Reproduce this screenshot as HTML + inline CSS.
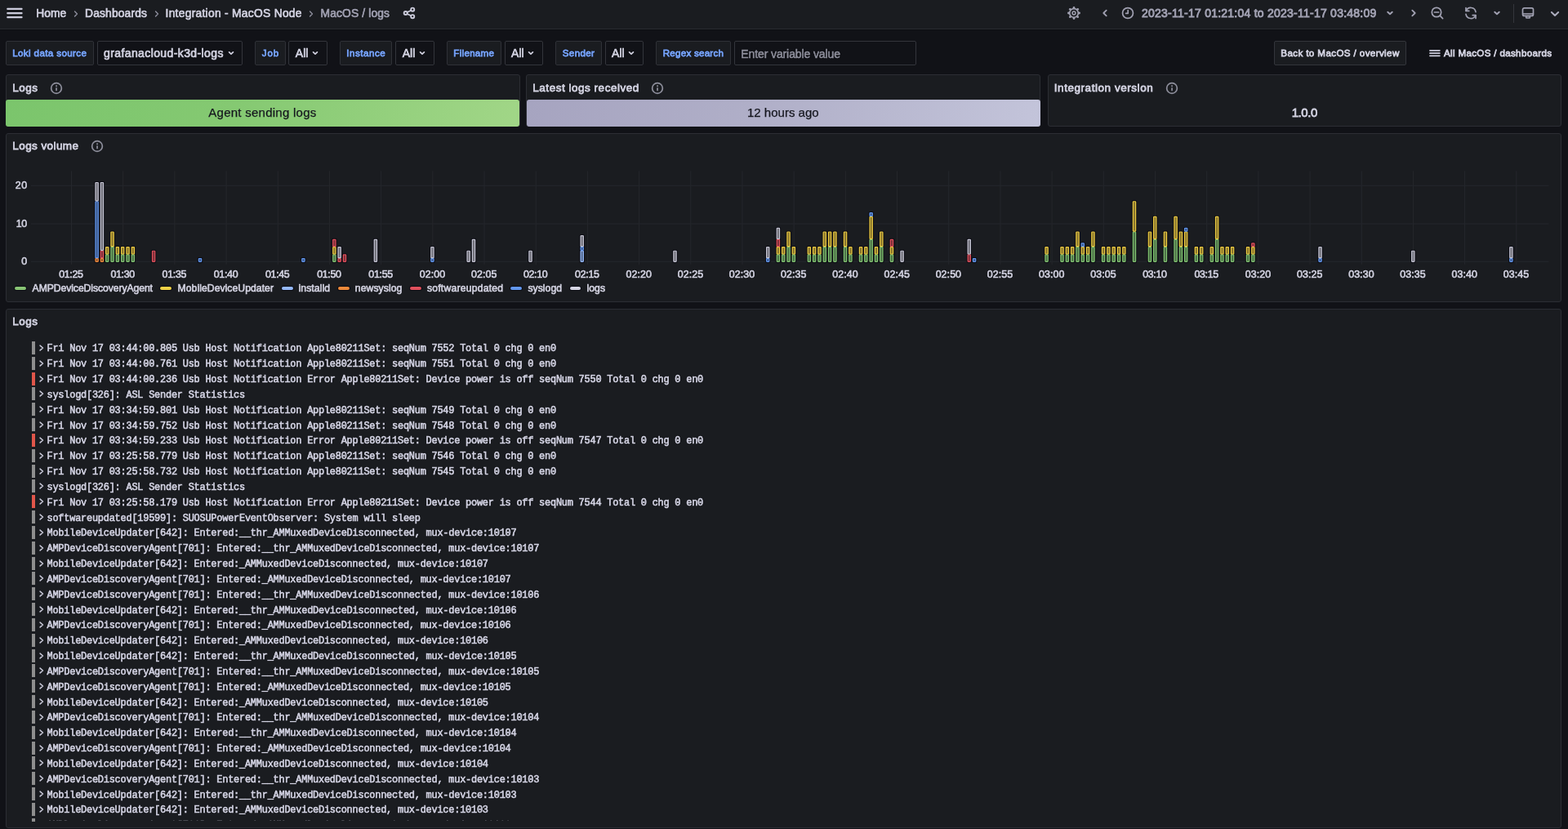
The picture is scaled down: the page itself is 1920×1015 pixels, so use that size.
<!DOCTYPE html>
<html lang="en"><head><meta charset="utf-8"><title>MacOS / logs - Dashboards - Grafana</title>
<style>
html,body{margin:0;padding:0;}
body{width:1920px;height:1015px;overflow:hidden;background:#111217;font-family:"Liberation Sans", Arial, sans-serif;font-size:14px;color:#d2d2e1;position:relative;}
#app{position:absolute;left:0;top:0;width:1920px;height:1015px;overflow:hidden;will-change:transform;}
.b{position:absolute;box-sizing:border-box;}
.t{position:absolute;white-space:pre;line-height:20px;text-shadow:0 0 1.2px rgba(0,0,5,0.9),0 0 1.2px rgba(0,0,5,0.9);}
svg{position:absolute;overflow:visible;}
.clip{position:absolute;overflow:hidden;}
</style></head>
<body>
<div id="app">
<header class="topnav" aria-label="Top navigation">
<div class="b" style="left:0px;top:0px;width:1920px;height:36px;background:#1a1c20;border-bottom:1px solid #292b30;"></div>
<div class="b" style="left:0px;top:36px;width:1920px;height:1px;background:#0d0e12;"></div>
<svg style="left:8px;top:8px" width="20" height="16" viewBox="0 0 20 16" ><g fill="#ccccdc"><rect x="0.2" y="1.7" width="19.4" height="2.3" rx="1"/><rect x="0.2" y="6.9" width="19.4" height="2.3" rx="1"/><rect x="0.2" y="12" width="19.4" height="2.3" rx="1"/></g></svg>
<span class="t" style="left:44.20px;top:6.82px;font-size:13.8px;color:#d2d2e1;letter-spacing:0.062px;-webkit-text-stroke:0.7px currentColor;">Home</span>
<svg style="left:87.3px;top:11px" width="12" height="12" viewBox="0 0 12 12" ><path d="M4.55 3.11 L7.45 6 L4.55 8.89" fill="none" stroke="#8e8f9e" stroke-width="1.4" stroke-linecap="round" stroke-linejoin="round"/></svg>
<span class="t" style="left:104.00px;top:6.82px;font-size:13.8px;color:#d2d2e1;letter-spacing:0.177px;-webkit-text-stroke:0.7px currentColor;">Dashboards</span>
<svg style="left:186px;top:11px" width="12" height="12" viewBox="0 0 12 12" ><path d="M4.55 3.11 L7.45 6 L4.55 8.89" fill="none" stroke="#8e8f9e" stroke-width="1.4" stroke-linecap="round" stroke-linejoin="round"/></svg>
<span class="t" style="left:202.50px;top:6.82px;font-size:13.8px;color:#d2d2e1;letter-spacing:0.292px;-webkit-text-stroke:0.7px currentColor;">Integration - MacOS Node</span>
<svg style="left:375.3px;top:11px" width="12" height="12" viewBox="0 0 12 12" ><path d="M4.55 3.11 L7.45 6 L4.55 8.89" fill="none" stroke="#8e8f9e" stroke-width="1.4" stroke-linecap="round" stroke-linejoin="round"/></svg>
<span class="t" style="left:392.50px;top:6.82px;font-size:13.8px;color:#a1a1b2;letter-spacing:0.153px;-webkit-text-stroke:0.7px currentColor;">MacOS / logs</span>
<svg style="left:493px;top:8px" width="18" height="18" viewBox="0 0 18 18" ><g fill="none" stroke="#ccccdc" stroke-width="1.9"><circle cx="12.2" cy="3.7" r="2.05"/><circle cx="3.7" cy="8" r="2.05"/><circle cx="12.2" cy="12.2" r="2.05"/><path d="M5.6 7 L10.3 4.7 M5.6 9 L10.3 11.3" stroke-width="1.7"/></g></svg>
<svg style="left:1306.5px;top:7.9px" width="16" height="16" viewBox="0 0 16 16" ><circle cx="8" cy="8" r="5.3" fill="none" stroke="#a1a1b2" stroke-width="1.7"/><circle cx="14.55" cy="8.00" r="1.4" fill="#a1a1b2"/><circle cx="12.63" cy="12.63" r="1.4" fill="#a1a1b2"/><circle cx="8.00" cy="14.55" r="1.4" fill="#a1a1b2"/><circle cx="3.37" cy="12.63" r="1.4" fill="#a1a1b2"/><circle cx="1.45" cy="8.00" r="1.4" fill="#a1a1b2"/><circle cx="3.37" cy="3.37" r="1.4" fill="#a1a1b2"/><circle cx="8.00" cy="1.45" r="1.4" fill="#a1a1b2"/><circle cx="12.63" cy="3.37" r="1.4" fill="#a1a1b2"/><circle cx="8" cy="8" r="1.9" fill="none" stroke="#a1a1b2" stroke-width="1.5"/></svg>
<svg style="left:1346.5px;top:10px" width="12" height="12" viewBox="0 0 12 12" ><path d="M7.70 2.60 L4.30 6 L7.70 9.40" fill="none" stroke="#a1a1b2" stroke-width="1.8" stroke-linecap="round" stroke-linejoin="round"/></svg>
<svg style="left:1373.25px;top:7.9px" width="16" height="16" viewBox="0 0 16 16" ><circle cx="8" cy="8" r="6.45" fill="none" stroke="#a1a1b2" stroke-width="1.7"/><path d="M8.2 4.6 V8.3 H5.6" fill="none" stroke="#a1a1b2" stroke-width="1.7" stroke-linecap="round" stroke-linejoin="round"/></svg>
<span class="t" style="left:1398.00px;top:6.05px;font-size:14px;color:#a1a1b2;letter-spacing:0.242px;-webkit-text-stroke:0.9px currentColor;">2023-11-17 01:21:04 to 2023-11-17 03:48:09</span>
<svg style="left:1696.4px;top:9.7px" width="12" height="12" viewBox="0 0 12 12" ><path d="M3.25 4.70 L6 7.30 L8.75 4.70" fill="none" stroke="#a1a1b2" stroke-width="1.9" stroke-linecap="round" stroke-linejoin="round"/></svg>
<svg style="left:1724.6px;top:10px" width="12" height="12" viewBox="0 0 12 12" ><path d="M4.30 2.60 L7.70 6 L4.30 9.40" fill="none" stroke="#a1a1b2" stroke-width="1.8" stroke-linecap="round" stroke-linejoin="round"/></svg>
<svg style="left:1750px;top:6.4px" width="20" height="20" viewBox="0 0 20 20" ><g fill="none" stroke="#a1a1b2" stroke-width="1.7" stroke-linecap="round"><circle cx="9" cy="9" r="5.7"/><path d="M13.4 13.4 L16.6 16.6"/><path d="M6.4 9 H11.6"/></g></svg>
<svg style="left:1792.4px;top:6.6px" width="18" height="18" viewBox="0 0 18 18" ><g fill="none" stroke="#a1a1b2" stroke-width="1.7" stroke-linecap="round" stroke-linejoin="round"><path d="M3.3 6.3 A6.1 6.1 0 0 1 15 7.6"/><path d="M14.7 11.7 A6.1 6.1 0 0 1 3 10.4"/><path d="M3 2.6 V6.4 H6.8"/><path d="M15 15.4 V11.6 H11.2"/></g></svg>
<svg style="left:1827.2px;top:9.7px" width="12" height="12" viewBox="0 0 12 12" ><path d="M3.25 4.70 L6 7.30 L8.75 4.70" fill="none" stroke="#a1a1b2" stroke-width="1.9" stroke-linecap="round" stroke-linejoin="round"/></svg>
<div class="b" style="left:1853px;top:4.5px;width:1.2px;height:23px;background:#34363c;"></div>
<svg style="left:1861.9px;top:7px" width="18" height="18" viewBox="0 0 18 18" ><g fill="none" stroke="#a1a1b2" stroke-width="1.7" stroke-linejoin="round"><rect x="2.5" y="2.8" width="13" height="9.6" rx="2"/><path d="M3 9.9 H15" stroke-width="1.5"/><rect x="6.6" y="12.8" width="4.8" height="2.3" rx="0.8" stroke-width="1.5"/></g></svg>
<svg style="left:1898px;top:11px" width="12" height="12" viewBox="0 0 12 12" ><path d="M1.88 4.05 L6 7.95 L10.12 4.05" fill="none" stroke="#adadbe" stroke-width="2.0" stroke-linecap="round" stroke-linejoin="round"/></svg>
</header>
<nav class="submenu" aria-label="Dashboard variables and links">
<div class="b" style="left:7px;top:50px;width:107.7px;height:30px;background:#1a1c20;border:1px solid #2f3137;border-radius:2px;"></div>
<span class="t" style="left:15.20px;top:55.08px;font-size:11.6px;color:#76a3fc;letter-spacing:0.381px;-webkit-text-stroke:0.8px currentColor;">Loki data source</span>
<div class="b" style="left:119px;top:50px;width:178px;height:30px;background:#111217;border:1px solid #33353b;border-radius:2px;"></div>
<span class="t" style="left:127.00px;top:54.95px;font-size:14px;color:#d2d2e1;letter-spacing:0.398px;-webkit-text-stroke:0.7px currentColor;">grafanacloud-k3d-logs</span>
<svg style="left:277px;top:58.8px" width="12" height="12" viewBox="0 0 12 12" ><path d="M3.58 4.86 L6 7.14 L8.42 4.86" fill="none" stroke="#d2d2e1" stroke-width="1.7" stroke-linecap="round" stroke-linejoin="round"/></svg>
<div class="b" style="left:312.2px;top:50px;width:37.5px;height:30px;background:#1a1c20;border:1px solid #2f3137;border-radius:2px;"></div>
<span class="t" style="left:320.80px;top:55.08px;font-size:11.6px;color:#76a3fc;letter-spacing:0.898px;-webkit-text-stroke:0.8px currentColor;">Job</span>
<div class="b" style="left:353.3px;top:50px;width:47.69999999999999px;height:30px;background:#111217;border:1px solid #33353b;border-radius:2px;"></div>
<span class="t" style="left:361.70px;top:54.95px;font-size:14px;color:#d2d2e1;letter-spacing:0.119px;-webkit-text-stroke:0.7px currentColor;">All</span>
<svg style="left:380px;top:58.8px" width="12" height="12" viewBox="0 0 12 12" ><path d="M3.58 4.86 L6 7.14 L8.42 4.86" fill="none" stroke="#d2d2e1" stroke-width="1.7" stroke-linecap="round" stroke-linejoin="round"/></svg>
<div class="b" style="left:416.2px;top:50px;width:64.30000000000001px;height:30px;background:#1a1c20;border:1px solid #2f3137;border-radius:2px;"></div>
<span class="t" style="left:424.30px;top:55.08px;font-size:11.6px;color:#76a3fc;letter-spacing:0.510px;-webkit-text-stroke:0.8px currentColor;">Instance</span>
<div class="b" style="left:484.2px;top:50px;width:47.50000000000006px;height:30px;background:#111217;border:1px solid #33353b;border-radius:2px;"></div>
<span class="t" style="left:492.70px;top:54.95px;font-size:14px;color:#d2d2e1;letter-spacing:0.019px;-webkit-text-stroke:0.7px currentColor;">All</span>
<svg style="left:511px;top:58.8px" width="12" height="12" viewBox="0 0 12 12" ><path d="M3.58 4.86 L6 7.14 L8.42 4.86" fill="none" stroke="#d2d2e1" stroke-width="1.7" stroke-linecap="round" stroke-linejoin="round"/></svg>
<div class="b" style="left:547px;top:50px;width:66.70000000000005px;height:30px;background:#1a1c20;border:1px solid #2f3137;border-radius:2px;"></div>
<span class="t" style="left:555.30px;top:55.08px;font-size:11.6px;color:#76a3fc;letter-spacing:0.288px;-webkit-text-stroke:0.8px currentColor;">Filename</span>
<div class="b" style="left:617.7px;top:50px;width:47.299999999999955px;height:30px;background:#111217;border:1px solid #33353b;border-radius:2px;"></div>
<span class="t" style="left:626.00px;top:54.95px;font-size:14px;color:#d2d2e1;letter-spacing:0.069px;-webkit-text-stroke:0.7px currentColor;">All</span>
<svg style="left:644.3px;top:58.8px" width="12" height="12" viewBox="0 0 12 12" ><path d="M3.58 4.86 L6 7.14 L8.42 4.86" fill="none" stroke="#d2d2e1" stroke-width="1.7" stroke-linecap="round" stroke-linejoin="round"/></svg>
<div class="b" style="left:680px;top:50px;width:56.700000000000045px;height:30px;background:#1a1c20;border:1px solid #2f3137;border-radius:2px;"></div>
<span class="t" style="left:688.70px;top:55.08px;font-size:11.6px;color:#76a3fc;letter-spacing:0.382px;-webkit-text-stroke:0.8px currentColor;">Sender</span>
<div class="b" style="left:740.7px;top:50px;width:47.299999999999955px;height:30px;background:#111217;border:1px solid #33353b;border-radius:2px;"></div>
<span class="t" style="left:749.00px;top:54.95px;font-size:14px;color:#d2d2e1;letter-spacing:0.069px;-webkit-text-stroke:0.7px currentColor;">All</span>
<svg style="left:767.3px;top:58.8px" width="12" height="12" viewBox="0 0 12 12" ><path d="M3.58 4.86 L6 7.14 L8.42 4.86" fill="none" stroke="#d2d2e1" stroke-width="1.7" stroke-linecap="round" stroke-linejoin="round"/></svg>
<div class="b" style="left:803.3px;top:50px;width:91.70000000000005px;height:30px;background:#1a1c20;border:1px solid #2f3137;border-radius:2px;"></div>
<span class="t" style="left:811.70px;top:55.08px;font-size:11.6px;color:#76a3fc;letter-spacing:0.250px;-webkit-text-stroke:0.8px currentColor;">Regex search</span>
<div class="b" style="left:899px;top:50px;width:223px;height:30px;background:#111217;border:1px solid #33353b;border-radius:2px;"></div>
<span class="t" style="left:907.30px;top:55.65px;font-size:14px;color:#8f909d;letter-spacing:-0.108px;-webkit-text-stroke:0.5px currentColor;">Enter variable value</span>
<div class="b" style="left:1560px;top:50px;width:162px;height:30px;background:#1a1c20;border:1px solid #33353b;border-radius:2px;"></div>
<span class="t" style="left:1568.30px;top:55.08px;font-size:11.6px;color:#d2d2e1;letter-spacing:0.393px;-webkit-text-stroke:0.8px currentColor;">Back to MacOS / overview</span>
<svg style="left:1750px;top:58px" width="14" height="14" viewBox="0 0 14 14" ><g fill="#ccccdc"><rect x="0.1" y="3" width="13.6" height="1.7" rx="0.8"/><rect x="0.1" y="6.3" width="13.6" height="1.7" rx="0.8"/><rect x="0.1" y="9.6" width="13.6" height="1.7" rx="0.8"/></g></svg>
<span class="t" style="left:1768.00px;top:55.08px;font-size:11.6px;color:#d2d2e1;letter-spacing:0.333px;-webkit-text-stroke:0.8px currentColor;">All MacOS / dashboards</span>
</nav>
<section class="stats" aria-label="Stat panels">
<div class="b" style="left:7px;top:91px;width:630px;height:64px;background:#1a1c20;border:1px solid #2c2e34;border-radius:3px;"></div>
<span class="t" style="left:15.30px;top:97.62px;font-size:13.5px;color:#d2d2e1;letter-spacing:0.473px;-webkit-text-stroke:0.8px currentColor;">Logs</span>
<svg style="left:60.599999999999994px;top:99.5px" width="16" height="16" viewBox="0 0 16 16" ><circle cx="8" cy="8" r="6.35" fill="none" stroke="#8e8f9c" stroke-width="1.7"/><rect x="7.2" y="7.3" width="1.7" height="4" rx="0.5" fill="#8e8f9c"/><circle cx="8.05" cy="5.2" r="1" fill="#8e8f9c"/></svg>
<div class="b" style="left:7.3px;top:122.3px;width:629.2px;height:32.5px;background:linear-gradient(100deg,#7bc56c 0%,#85c972 45%,#a1d687 100%);border-radius:3px;"></div>
<span class="t" style="left:255.30px;top:128.30px;font-size:15px;color:#15161e;letter-spacing:0.258px;-webkit-text-stroke:0.25px currentColor;text-shadow:none;">Agent sending logs</span>
<div class="b" style="left:644px;top:91px;width:630px;height:64px;background:#1a1c20;border:1px solid #2c2e34;border-radius:3px;"></div>
<span class="t" style="left:652.30px;top:97.62px;font-size:13.5px;color:#d2d2e1;letter-spacing:0.522px;-webkit-text-stroke:0.8px currentColor;">Latest logs received</span>
<svg style="left:797px;top:99.5px" width="16" height="16" viewBox="0 0 16 16" ><circle cx="8" cy="8" r="6.35" fill="none" stroke="#8e8f9c" stroke-width="1.7"/><rect x="7.2" y="7.3" width="1.7" height="4" rx="0.5" fill="#8e8f9c"/><circle cx="8.05" cy="5.2" r="1" fill="#8e8f9c"/></svg>
<div class="b" style="left:644.7px;top:122.3px;width:629px;height:32.5px;background:linear-gradient(100deg,#a6a4c0 0%,#b0afc8 45%,#c3c4da 100%);border-radius:3px;"></div>
<span class="t" style="left:914.95px;top:128.30px;font-size:15px;color:#15161e;letter-spacing:0.011px;-webkit-text-stroke:0.25px currentColor;text-shadow:none;">12 hours ago</span>
<div class="b" style="left:1282.5px;top:91px;width:629.5px;height:64px;background:#1a1c20;border:1px solid #2c2e34;border-radius:3px;"></div>
<span class="t" style="left:1290.80px;top:97.62px;font-size:13.5px;color:#d2d2e1;letter-spacing:0.546px;-webkit-text-stroke:0.8px currentColor;">Integration version</span>
<svg style="left:1427px;top:99.5px" width="16" height="16" viewBox="0 0 16 16" ><circle cx="8" cy="8" r="6.35" fill="none" stroke="#8e8f9c" stroke-width="1.7"/><rect x="7.2" y="7.3" width="1.7" height="4" rx="0.5" fill="#8e8f9c"/><circle cx="8.05" cy="5.2" r="1" fill="#8e8f9c"/></svg>
<span class="t" style="left:1581.70px;top:128.30px;font-size:15px;color:#d2d2e1;letter-spacing:-0.444px;-webkit-text-stroke:0.8px currentColor;">1.0.0</span>
</section>
<section class="panel-chart" aria-label="Logs volume">
<div class="b" style="left:7px;top:163px;width:1905px;height:207px;background:#1a1c20;border:1px solid #2c2e34;border-radius:3px;"></div>
<span class="t" style="left:15.30px;top:168.62px;font-size:13.5px;color:#d2d2e1;letter-spacing:0.415px;-webkit-text-stroke:0.8px currentColor;">Logs volume</span>
<svg style="left:110.7px;top:170.5px" width="16" height="16" viewBox="0 0 16 16" ><circle cx="8" cy="8" r="6.35" fill="none" stroke="#8e8f9c" stroke-width="1.7"/><rect x="7.2" y="7.3" width="1.7" height="4" rx="0.5" fill="#8e8f9c"/><circle cx="8.05" cy="5.2" r="1" fill="#8e8f9c"/></svg>
<svg style="left:0;top:0" width="1920" height="380" viewBox="0 0 1920 380"><rect x="38" y="319.75" width="1858.5" height="1" fill="#25272c"/><rect x="38" y="273.50" width="1858.5" height="1" fill="#25272c"/><rect x="38" y="226.75" width="1858.5" height="1" fill="#25272c"/><rect x="87.00" y="209.4" width="1" height="114.4" fill="#25272c"/><rect x="150.19" y="209.4" width="1" height="114.4" fill="#25272c"/><rect x="213.38" y="209.4" width="1" height="114.4" fill="#25272c"/><rect x="276.57" y="209.4" width="1" height="114.4" fill="#25272c"/><rect x="339.76" y="209.4" width="1" height="114.4" fill="#25272c"/><rect x="402.95" y="209.4" width="1" height="114.4" fill="#25272c"/><rect x="466.14" y="209.4" width="1" height="114.4" fill="#25272c"/><rect x="529.33" y="209.4" width="1" height="114.4" fill="#25272c"/><rect x="592.52" y="209.4" width="1" height="114.4" fill="#25272c"/><rect x="655.71" y="209.4" width="1" height="114.4" fill="#25272c"/><rect x="718.90" y="209.4" width="1" height="114.4" fill="#25272c"/><rect x="782.09" y="209.4" width="1" height="114.4" fill="#25272c"/><rect x="845.28" y="209.4" width="1" height="114.4" fill="#25272c"/><rect x="908.47" y="209.4" width="1" height="114.4" fill="#25272c"/><rect x="971.66" y="209.4" width="1" height="114.4" fill="#25272c"/><rect x="1034.85" y="209.4" width="1" height="114.4" fill="#25272c"/><rect x="1098.04" y="209.4" width="1" height="114.4" fill="#25272c"/><rect x="1161.23" y="209.4" width="1" height="114.4" fill="#25272c"/><rect x="1224.42" y="209.4" width="1" height="114.4" fill="#25272c"/><rect x="1287.61" y="209.4" width="1" height="114.4" fill="#25272c"/><rect x="1350.80" y="209.4" width="1" height="114.4" fill="#25272c"/><rect x="1413.99" y="209.4" width="1" height="114.4" fill="#25272c"/><rect x="1477.18" y="209.4" width="1" height="114.4" fill="#25272c"/><rect x="1540.37" y="209.4" width="1" height="114.4" fill="#25272c"/><rect x="1603.56" y="209.4" width="1" height="114.4" fill="#25272c"/><rect x="1666.75" y="209.4" width="1" height="114.4" fill="#25272c"/><rect x="1729.94" y="209.4" width="1" height="114.4" fill="#25272c"/><rect x="1793.13" y="209.4" width="1" height="114.4" fill="#25272c"/><rect x="1856.32" y="209.4" width="1" height="114.4" fill="#25272c"/><g fill="#07070f" fill-opacity="0.75"><rect x="115.35" y="222.06" width="6.5" height="99.59" rx="1.5"/><rect x="121.67" y="222.06" width="6.5" height="99.59" rx="1.5"/><rect x="127.99" y="301.14" width="6.5" height="20.51" rx="1.5"/><rect x="134.31" y="282.53" width="6.5" height="39.12" rx="1.5"/><rect x="140.63" y="301.14" width="6.5" height="20.51" rx="1.5"/><rect x="146.95" y="301.14" width="6.5" height="20.51" rx="1.5"/><rect x="153.27" y="301.14" width="6.5" height="20.51" rx="1.5"/><rect x="159.59" y="301.14" width="6.5" height="20.51" rx="1.5"/><rect x="184.88" y="305.79" width="6.5" height="15.86" rx="1.5"/><rect x="241.76" y="315.10" width="6.5" height="6.55" rx="1.5"/><rect x="368.17" y="315.10" width="6.5" height="6.55" rx="1.5"/><rect x="406.09" y="291.84" width="6.5" height="29.81" rx="1.5"/><rect x="412.41" y="301.14" width="6.5" height="20.51" rx="1.5"/><rect x="418.73" y="310.45" width="6.5" height="11.20" rx="1.5"/><rect x="456.65" y="291.84" width="6.5" height="29.81" rx="1.5"/><rect x="526.18" y="301.14" width="6.5" height="20.51" rx="1.5"/><rect x="570.42" y="305.79" width="6.5" height="15.86" rx="1.5"/><rect x="576.74" y="291.84" width="6.5" height="29.81" rx="1.5"/><rect x="646.27" y="305.79" width="6.5" height="15.86" rx="1.5"/><rect x="709.47" y="287.19" width="6.5" height="34.46" rx="1.5"/><rect x="823.24" y="305.79" width="6.5" height="15.86" rx="1.5"/><rect x="937.00" y="301.14" width="6.5" height="20.51" rx="1.5"/><rect x="949.64" y="277.88" width="6.5" height="43.77" rx="1.5"/><rect x="955.97" y="301.14" width="6.5" height="20.51" rx="1.5"/><rect x="962.29" y="282.53" width="6.5" height="39.12" rx="1.5"/><rect x="968.61" y="301.14" width="6.5" height="20.51" rx="1.5"/><rect x="987.57" y="301.14" width="6.5" height="20.51" rx="1.5"/><rect x="993.89" y="301.14" width="6.5" height="20.51" rx="1.5"/><rect x="1000.21" y="301.14" width="6.5" height="20.51" rx="1.5"/><rect x="1006.53" y="282.53" width="6.5" height="39.12" rx="1.5"/><rect x="1012.85" y="282.53" width="6.5" height="39.12" rx="1.5"/><rect x="1019.17" y="282.53" width="6.5" height="39.12" rx="1.5"/><rect x="1031.81" y="282.53" width="6.5" height="39.12" rx="1.5"/><rect x="1038.13" y="301.14" width="6.5" height="20.51" rx="1.5"/><rect x="1050.77" y="301.14" width="6.5" height="20.51" rx="1.5"/><rect x="1057.09" y="301.14" width="6.5" height="20.51" rx="1.5"/><rect x="1063.41" y="259.27" width="6.5" height="62.38" rx="1.5"/><rect x="1069.73" y="301.14" width="6.5" height="20.51" rx="1.5"/><rect x="1076.05" y="282.53" width="6.5" height="39.12" rx="1.5"/><rect x="1088.69" y="291.84" width="6.5" height="29.81" rx="1.5"/><rect x="1101.33" y="305.79" width="6.5" height="15.86" rx="1.5"/><rect x="1183.50" y="291.84" width="6.5" height="29.81" rx="1.5"/><rect x="1189.82" y="315.10" width="6.5" height="6.55" rx="1.5"/><rect x="1278.31" y="301.14" width="6.5" height="20.51" rx="1.5"/><rect x="1297.27" y="301.14" width="6.5" height="20.51" rx="1.5"/><rect x="1303.59" y="301.14" width="6.5" height="20.51" rx="1.5"/><rect x="1309.91" y="301.14" width="6.5" height="20.51" rx="1.5"/><rect x="1316.23" y="282.53" width="6.5" height="39.12" rx="1.5"/><rect x="1322.55" y="296.49" width="6.5" height="25.16" rx="1.5"/><rect x="1328.87" y="301.14" width="6.5" height="20.51" rx="1.5"/><rect x="1335.19" y="282.53" width="6.5" height="39.12" rx="1.5"/><rect x="1347.83" y="301.14" width="6.5" height="20.51" rx="1.5"/><rect x="1354.15" y="301.14" width="6.5" height="20.51" rx="1.5"/><rect x="1360.47" y="301.14" width="6.5" height="20.51" rx="1.5"/><rect x="1366.79" y="301.14" width="6.5" height="20.51" rx="1.5"/><rect x="1373.11" y="301.14" width="6.5" height="20.51" rx="1.5"/><rect x="1385.75" y="245.32" width="6.5" height="76.33" rx="1.5"/><rect x="1404.71" y="282.53" width="6.5" height="39.12" rx="1.5"/><rect x="1411.03" y="263.93" width="6.5" height="57.72" rx="1.5"/><rect x="1423.67" y="282.53" width="6.5" height="39.12" rx="1.5"/><rect x="1436.32" y="263.93" width="6.5" height="57.72" rx="1.5"/><rect x="1442.64" y="282.53" width="6.5" height="39.12" rx="1.5"/><rect x="1448.96" y="277.88" width="6.5" height="43.77" rx="1.5"/><rect x="1461.60" y="301.14" width="6.5" height="20.51" rx="1.5"/><rect x="1467.92" y="301.14" width="6.5" height="20.51" rx="1.5"/><rect x="1480.56" y="301.14" width="6.5" height="20.51" rx="1.5"/><rect x="1486.88" y="263.93" width="6.5" height="57.72" rx="1.5"/><rect x="1493.20" y="301.14" width="6.5" height="20.51" rx="1.5"/><rect x="1499.52" y="301.14" width="6.5" height="20.51" rx="1.5"/><rect x="1505.84" y="301.14" width="6.5" height="20.51" rx="1.5"/><rect x="1524.80" y="301.14" width="6.5" height="20.51" rx="1.5"/><rect x="1531.12" y="296.49" width="6.5" height="25.16" rx="1.5"/><rect x="1613.29" y="301.14" width="6.5" height="20.51" rx="1.5"/><rect x="1727.05" y="305.79" width="6.5" height="15.86" rx="1.5"/><rect x="1847.14" y="301.14" width="6.5" height="20.51" rx="1.5"/></g><rect x="116.95" y="316.55" width="3.3" height="3.75" rx="0.5" fill="#f08a3c" fill-opacity="0.55" stroke="#f08a3c" stroke-width="1.2"/><rect x="116.95" y="246.77" width="3.3" height="68.88" rx="0.5" fill="#6297ee" fill-opacity="0.55" stroke="#6297ee" stroke-width="1.2"/><rect x="116.95" y="223.51" width="3.3" height="22.36" rx="0.5" fill="#c4c4d2" fill-opacity="0.55" stroke="#c4c4d2" stroke-width="1.2"/><rect x="123.27" y="316.55" width="3.3" height="3.75" rx="0.5" fill="#f08a3c" fill-opacity="0.55" stroke="#f08a3c" stroke-width="1.2"/><rect x="123.27" y="307.24" width="3.3" height="8.40" rx="0.5" fill="#e0505c" fill-opacity="0.55" stroke="#e0505c" stroke-width="1.2"/><rect x="123.27" y="223.51" width="3.3" height="82.84" rx="0.5" fill="#c4c4d2" fill-opacity="0.55" stroke="#c4c4d2" stroke-width="1.2"/><rect x="129.59" y="311.90" width="3.3" height="8.40" rx="0.5" fill="#82c472" fill-opacity="0.55" stroke="#82c472" stroke-width="1.2"/><rect x="129.59" y="302.59" width="3.3" height="8.40" rx="0.5" fill="#eccb42" fill-opacity="0.55" stroke="#eccb42" stroke-width="1.2"/><rect x="135.91" y="302.59" width="3.3" height="17.71" rx="0.5" fill="#82c472" fill-opacity="0.55" stroke="#82c472" stroke-width="1.2"/><rect x="135.91" y="283.98" width="3.3" height="17.71" rx="0.5" fill="#eccb42" fill-opacity="0.55" stroke="#eccb42" stroke-width="1.2"/><rect x="142.23" y="311.90" width="3.3" height="8.40" rx="0.5" fill="#82c472" fill-opacity="0.55" stroke="#82c472" stroke-width="1.2"/><rect x="142.23" y="302.59" width="3.3" height="8.40" rx="0.5" fill="#eccb42" fill-opacity="0.55" stroke="#eccb42" stroke-width="1.2"/><rect x="148.55" y="311.90" width="3.3" height="8.40" rx="0.5" fill="#82c472" fill-opacity="0.55" stroke="#82c472" stroke-width="1.2"/><rect x="148.55" y="302.59" width="3.3" height="8.40" rx="0.5" fill="#eccb42" fill-opacity="0.55" stroke="#eccb42" stroke-width="1.2"/><rect x="154.87" y="311.90" width="3.3" height="8.40" rx="0.5" fill="#82c472" fill-opacity="0.55" stroke="#82c472" stroke-width="1.2"/><rect x="154.87" y="302.59" width="3.3" height="8.40" rx="0.5" fill="#eccb42" fill-opacity="0.55" stroke="#eccb42" stroke-width="1.2"/><rect x="161.19" y="311.90" width="3.3" height="8.40" rx="0.5" fill="#82c472" fill-opacity="0.55" stroke="#82c472" stroke-width="1.2"/><rect x="161.19" y="302.59" width="3.3" height="8.40" rx="0.5" fill="#eccb42" fill-opacity="0.55" stroke="#eccb42" stroke-width="1.2"/><rect x="186.48" y="307.24" width="3.3" height="13.06" rx="0.5" fill="#e0505c" fill-opacity="0.55" stroke="#e0505c" stroke-width="1.2"/><rect x="243.36" y="316.55" width="3.3" height="3.75" rx="0.5" fill="#6297ee" fill-opacity="0.55" stroke="#6297ee" stroke-width="1.2"/><rect x="369.77" y="316.55" width="3.3" height="3.75" rx="0.5" fill="#6297ee" fill-opacity="0.55" stroke="#6297ee" stroke-width="1.2"/><rect x="407.69" y="311.90" width="3.3" height="8.40" rx="0.5" fill="#82c472" fill-opacity="0.55" stroke="#82c472" stroke-width="1.2"/><rect x="407.69" y="302.59" width="3.3" height="8.40" rx="0.5" fill="#eccb42" fill-opacity="0.55" stroke="#eccb42" stroke-width="1.2"/><rect x="407.69" y="293.29" width="3.3" height="8.40" rx="0.5" fill="#e0505c" fill-opacity="0.55" stroke="#e0505c" stroke-width="1.2"/><rect x="414.01" y="316.55" width="3.3" height="3.75" rx="0.5" fill="#e0505c" fill-opacity="0.55" stroke="#e0505c" stroke-width="1.2"/><rect x="414.01" y="302.59" width="3.3" height="13.06" rx="0.5" fill="#c4c4d2" fill-opacity="0.55" stroke="#c4c4d2" stroke-width="1.2"/><rect x="420.33" y="311.90" width="3.3" height="8.40" rx="0.5" fill="#e0505c" fill-opacity="0.55" stroke="#e0505c" stroke-width="1.2"/><rect x="458.25" y="293.29" width="3.3" height="27.01" rx="0.5" fill="#c4c4d2" fill-opacity="0.55" stroke="#c4c4d2" stroke-width="1.2"/><rect x="527.78" y="316.55" width="3.3" height="3.75" rx="0.5" fill="#6297ee" fill-opacity="0.55" stroke="#6297ee" stroke-width="1.2"/><rect x="527.78" y="302.59" width="3.3" height="13.06" rx="0.5" fill="#c4c4d2" fill-opacity="0.55" stroke="#c4c4d2" stroke-width="1.2"/><rect x="572.02" y="307.24" width="3.3" height="13.06" rx="0.5" fill="#c4c4d2" fill-opacity="0.55" stroke="#c4c4d2" stroke-width="1.2"/><rect x="578.34" y="293.29" width="3.3" height="27.01" rx="0.5" fill="#c4c4d2" fill-opacity="0.55" stroke="#c4c4d2" stroke-width="1.2"/><rect x="647.87" y="307.24" width="3.3" height="13.06" rx="0.5" fill="#c4c4d2" fill-opacity="0.55" stroke="#c4c4d2" stroke-width="1.2"/><rect x="711.07" y="307.24" width="3.3" height="13.06" rx="0.5" fill="#94b8f8" fill-opacity="0.55" stroke="#94b8f8" stroke-width="1.2"/><rect x="711.07" y="302.59" width="3.3" height="3.75" rx="0.5" fill="#6297ee" fill-opacity="0.55" stroke="#6297ee" stroke-width="1.2"/><rect x="711.07" y="288.64" width="3.3" height="13.06" rx="0.5" fill="#c4c4d2" fill-opacity="0.55" stroke="#c4c4d2" stroke-width="1.2"/><rect x="824.84" y="307.24" width="3.3" height="13.06" rx="0.5" fill="#c4c4d2" fill-opacity="0.55" stroke="#c4c4d2" stroke-width="1.2"/><rect x="938.60" y="316.55" width="3.3" height="3.75" rx="0.5" fill="#6297ee" fill-opacity="0.55" stroke="#6297ee" stroke-width="1.2"/><rect x="938.60" y="302.59" width="3.3" height="13.06" rx="0.5" fill="#c4c4d2" fill-opacity="0.55" stroke="#c4c4d2" stroke-width="1.2"/><rect x="951.24" y="311.90" width="3.3" height="8.40" rx="0.5" fill="#82c472" fill-opacity="0.55" stroke="#82c472" stroke-width="1.2"/><rect x="951.24" y="302.59" width="3.3" height="8.40" rx="0.5" fill="#eccb42" fill-opacity="0.55" stroke="#eccb42" stroke-width="1.2"/><rect x="951.24" y="293.29" width="3.3" height="8.40" rx="0.5" fill="#e0505c" fill-opacity="0.55" stroke="#e0505c" stroke-width="1.2"/><rect x="951.24" y="279.33" width="3.3" height="13.06" rx="0.5" fill="#c4c4d2" fill-opacity="0.55" stroke="#c4c4d2" stroke-width="1.2"/><rect x="957.57" y="311.90" width="3.3" height="8.40" rx="0.5" fill="#82c472" fill-opacity="0.55" stroke="#82c472" stroke-width="1.2"/><rect x="957.57" y="302.59" width="3.3" height="8.40" rx="0.5" fill="#eccb42" fill-opacity="0.55" stroke="#eccb42" stroke-width="1.2"/><rect x="963.89" y="302.59" width="3.3" height="17.71" rx="0.5" fill="#82c472" fill-opacity="0.55" stroke="#82c472" stroke-width="1.2"/><rect x="963.89" y="283.98" width="3.3" height="17.71" rx="0.5" fill="#eccb42" fill-opacity="0.55" stroke="#eccb42" stroke-width="1.2"/><rect x="970.21" y="311.90" width="3.3" height="8.40" rx="0.5" fill="#82c472" fill-opacity="0.55" stroke="#82c472" stroke-width="1.2"/><rect x="970.21" y="302.59" width="3.3" height="8.40" rx="0.5" fill="#eccb42" fill-opacity="0.55" stroke="#eccb42" stroke-width="1.2"/><rect x="989.17" y="311.90" width="3.3" height="8.40" rx="0.5" fill="#82c472" fill-opacity="0.55" stroke="#82c472" stroke-width="1.2"/><rect x="989.17" y="302.59" width="3.3" height="8.40" rx="0.5" fill="#eccb42" fill-opacity="0.55" stroke="#eccb42" stroke-width="1.2"/><rect x="995.49" y="311.90" width="3.3" height="8.40" rx="0.5" fill="#82c472" fill-opacity="0.55" stroke="#82c472" stroke-width="1.2"/><rect x="995.49" y="302.59" width="3.3" height="8.40" rx="0.5" fill="#eccb42" fill-opacity="0.55" stroke="#eccb42" stroke-width="1.2"/><rect x="1001.81" y="311.90" width="3.3" height="8.40" rx="0.5" fill="#82c472" fill-opacity="0.55" stroke="#82c472" stroke-width="1.2"/><rect x="1001.81" y="302.59" width="3.3" height="8.40" rx="0.5" fill="#eccb42" fill-opacity="0.55" stroke="#eccb42" stroke-width="1.2"/><rect x="1008.13" y="302.59" width="3.3" height="17.71" rx="0.5" fill="#82c472" fill-opacity="0.55" stroke="#82c472" stroke-width="1.2"/><rect x="1008.13" y="283.98" width="3.3" height="17.71" rx="0.5" fill="#eccb42" fill-opacity="0.55" stroke="#eccb42" stroke-width="1.2"/><rect x="1014.45" y="302.59" width="3.3" height="17.71" rx="0.5" fill="#82c472" fill-opacity="0.55" stroke="#82c472" stroke-width="1.2"/><rect x="1014.45" y="283.98" width="3.3" height="17.71" rx="0.5" fill="#eccb42" fill-opacity="0.55" stroke="#eccb42" stroke-width="1.2"/><rect x="1020.77" y="302.59" width="3.3" height="17.71" rx="0.5" fill="#82c472" fill-opacity="0.55" stroke="#82c472" stroke-width="1.2"/><rect x="1020.77" y="283.98" width="3.3" height="17.71" rx="0.5" fill="#eccb42" fill-opacity="0.55" stroke="#eccb42" stroke-width="1.2"/><rect x="1033.41" y="302.59" width="3.3" height="17.71" rx="0.5" fill="#82c472" fill-opacity="0.55" stroke="#82c472" stroke-width="1.2"/><rect x="1033.41" y="283.98" width="3.3" height="17.71" rx="0.5" fill="#eccb42" fill-opacity="0.55" stroke="#eccb42" stroke-width="1.2"/><rect x="1039.73" y="311.90" width="3.3" height="8.40" rx="0.5" fill="#82c472" fill-opacity="0.55" stroke="#82c472" stroke-width="1.2"/><rect x="1039.73" y="302.59" width="3.3" height="8.40" rx="0.5" fill="#eccb42" fill-opacity="0.55" stroke="#eccb42" stroke-width="1.2"/><rect x="1052.37" y="311.90" width="3.3" height="8.40" rx="0.5" fill="#82c472" fill-opacity="0.55" stroke="#82c472" stroke-width="1.2"/><rect x="1052.37" y="302.59" width="3.3" height="8.40" rx="0.5" fill="#eccb42" fill-opacity="0.55" stroke="#eccb42" stroke-width="1.2"/><rect x="1058.69" y="311.90" width="3.3" height="8.40" rx="0.5" fill="#82c472" fill-opacity="0.55" stroke="#82c472" stroke-width="1.2"/><rect x="1058.69" y="302.59" width="3.3" height="8.40" rx="0.5" fill="#eccb42" fill-opacity="0.55" stroke="#eccb42" stroke-width="1.2"/><rect x="1065.01" y="293.29" width="3.3" height="27.01" rx="0.5" fill="#82c472" fill-opacity="0.55" stroke="#82c472" stroke-width="1.2"/><rect x="1065.01" y="265.38" width="3.3" height="27.01" rx="0.5" fill="#eccb42" fill-opacity="0.55" stroke="#eccb42" stroke-width="1.2"/><rect x="1065.01" y="260.72" width="3.3" height="3.75" rx="0.5" fill="#6297ee" fill-opacity="0.55" stroke="#6297ee" stroke-width="1.2"/><rect x="1071.33" y="311.90" width="3.3" height="8.40" rx="0.5" fill="#82c472" fill-opacity="0.55" stroke="#82c472" stroke-width="1.2"/><rect x="1071.33" y="302.59" width="3.3" height="8.40" rx="0.5" fill="#eccb42" fill-opacity="0.55" stroke="#eccb42" stroke-width="1.2"/><rect x="1077.65" y="302.59" width="3.3" height="17.71" rx="0.5" fill="#82c472" fill-opacity="0.55" stroke="#82c472" stroke-width="1.2"/><rect x="1077.65" y="283.98" width="3.3" height="17.71" rx="0.5" fill="#eccb42" fill-opacity="0.55" stroke="#eccb42" stroke-width="1.2"/><rect x="1090.29" y="311.90" width="3.3" height="8.40" rx="0.5" fill="#82c472" fill-opacity="0.55" stroke="#82c472" stroke-width="1.2"/><rect x="1090.29" y="302.59" width="3.3" height="8.40" rx="0.5" fill="#eccb42" fill-opacity="0.55" stroke="#eccb42" stroke-width="1.2"/><rect x="1090.29" y="293.29" width="3.3" height="8.40" rx="0.5" fill="#e0505c" fill-opacity="0.55" stroke="#e0505c" stroke-width="1.2"/><rect x="1102.93" y="307.24" width="3.3" height="13.06" rx="0.5" fill="#c4c4d2" fill-opacity="0.55" stroke="#c4c4d2" stroke-width="1.2"/><rect x="1185.10" y="311.90" width="3.3" height="8.40" rx="0.5" fill="#e0505c" fill-opacity="0.55" stroke="#e0505c" stroke-width="1.2"/><rect x="1185.10" y="293.29" width="3.3" height="17.71" rx="0.5" fill="#c4c4d2" fill-opacity="0.55" stroke="#c4c4d2" stroke-width="1.2"/><rect x="1191.42" y="316.55" width="3.3" height="3.75" rx="0.5" fill="#6297ee" fill-opacity="0.55" stroke="#6297ee" stroke-width="1.2"/><rect x="1279.91" y="311.90" width="3.3" height="8.40" rx="0.5" fill="#82c472" fill-opacity="0.55" stroke="#82c472" stroke-width="1.2"/><rect x="1279.91" y="302.59" width="3.3" height="8.40" rx="0.5" fill="#eccb42" fill-opacity="0.55" stroke="#eccb42" stroke-width="1.2"/><rect x="1298.87" y="311.90" width="3.3" height="8.40" rx="0.5" fill="#82c472" fill-opacity="0.55" stroke="#82c472" stroke-width="1.2"/><rect x="1298.87" y="302.59" width="3.3" height="8.40" rx="0.5" fill="#eccb42" fill-opacity="0.55" stroke="#eccb42" stroke-width="1.2"/><rect x="1305.19" y="311.90" width="3.3" height="8.40" rx="0.5" fill="#82c472" fill-opacity="0.55" stroke="#82c472" stroke-width="1.2"/><rect x="1305.19" y="302.59" width="3.3" height="8.40" rx="0.5" fill="#eccb42" fill-opacity="0.55" stroke="#eccb42" stroke-width="1.2"/><rect x="1311.51" y="311.90" width="3.3" height="8.40" rx="0.5" fill="#82c472" fill-opacity="0.55" stroke="#82c472" stroke-width="1.2"/><rect x="1311.51" y="302.59" width="3.3" height="8.40" rx="0.5" fill="#eccb42" fill-opacity="0.55" stroke="#eccb42" stroke-width="1.2"/><rect x="1317.83" y="302.59" width="3.3" height="17.71" rx="0.5" fill="#82c472" fill-opacity="0.55" stroke="#82c472" stroke-width="1.2"/><rect x="1317.83" y="283.98" width="3.3" height="17.71" rx="0.5" fill="#eccb42" fill-opacity="0.55" stroke="#eccb42" stroke-width="1.2"/><rect x="1324.15" y="311.90" width="3.3" height="8.40" rx="0.5" fill="#82c472" fill-opacity="0.55" stroke="#82c472" stroke-width="1.2"/><rect x="1324.15" y="302.59" width="3.3" height="8.40" rx="0.5" fill="#eccb42" fill-opacity="0.55" stroke="#eccb42" stroke-width="1.2"/><rect x="1324.15" y="297.94" width="3.3" height="3.75" rx="0.5" fill="#6297ee" fill-opacity="0.55" stroke="#6297ee" stroke-width="1.2"/><rect x="1330.47" y="311.90" width="3.3" height="8.40" rx="0.5" fill="#82c472" fill-opacity="0.55" stroke="#82c472" stroke-width="1.2"/><rect x="1330.47" y="302.59" width="3.3" height="8.40" rx="0.5" fill="#eccb42" fill-opacity="0.55" stroke="#eccb42" stroke-width="1.2"/><rect x="1336.79" y="302.59" width="3.3" height="17.71" rx="0.5" fill="#82c472" fill-opacity="0.55" stroke="#82c472" stroke-width="1.2"/><rect x="1336.79" y="283.98" width="3.3" height="17.71" rx="0.5" fill="#eccb42" fill-opacity="0.55" stroke="#eccb42" stroke-width="1.2"/><rect x="1349.43" y="311.90" width="3.3" height="8.40" rx="0.5" fill="#82c472" fill-opacity="0.55" stroke="#82c472" stroke-width="1.2"/><rect x="1349.43" y="302.59" width="3.3" height="8.40" rx="0.5" fill="#eccb42" fill-opacity="0.55" stroke="#eccb42" stroke-width="1.2"/><rect x="1355.75" y="311.90" width="3.3" height="8.40" rx="0.5" fill="#82c472" fill-opacity="0.55" stroke="#82c472" stroke-width="1.2"/><rect x="1355.75" y="302.59" width="3.3" height="8.40" rx="0.5" fill="#eccb42" fill-opacity="0.55" stroke="#eccb42" stroke-width="1.2"/><rect x="1362.07" y="311.90" width="3.3" height="8.40" rx="0.5" fill="#82c472" fill-opacity="0.55" stroke="#82c472" stroke-width="1.2"/><rect x="1362.07" y="302.59" width="3.3" height="8.40" rx="0.5" fill="#eccb42" fill-opacity="0.55" stroke="#eccb42" stroke-width="1.2"/><rect x="1368.39" y="311.90" width="3.3" height="8.40" rx="0.5" fill="#82c472" fill-opacity="0.55" stroke="#82c472" stroke-width="1.2"/><rect x="1368.39" y="302.59" width="3.3" height="8.40" rx="0.5" fill="#eccb42" fill-opacity="0.55" stroke="#eccb42" stroke-width="1.2"/><rect x="1374.71" y="311.90" width="3.3" height="8.40" rx="0.5" fill="#82c472" fill-opacity="0.55" stroke="#82c472" stroke-width="1.2"/><rect x="1374.71" y="302.59" width="3.3" height="8.40" rx="0.5" fill="#eccb42" fill-opacity="0.55" stroke="#eccb42" stroke-width="1.2"/><rect x="1387.35" y="283.98" width="3.3" height="36.32" rx="0.5" fill="#82c472" fill-opacity="0.55" stroke="#82c472" stroke-width="1.2"/><rect x="1387.35" y="246.77" width="3.3" height="36.32" rx="0.5" fill="#eccb42" fill-opacity="0.55" stroke="#eccb42" stroke-width="1.2"/><rect x="1406.31" y="302.59" width="3.3" height="17.71" rx="0.5" fill="#82c472" fill-opacity="0.55" stroke="#82c472" stroke-width="1.2"/><rect x="1406.31" y="283.98" width="3.3" height="17.71" rx="0.5" fill="#eccb42" fill-opacity="0.55" stroke="#eccb42" stroke-width="1.2"/><rect x="1412.63" y="293.29" width="3.3" height="27.01" rx="0.5" fill="#82c472" fill-opacity="0.55" stroke="#82c472" stroke-width="1.2"/><rect x="1412.63" y="265.38" width="3.3" height="27.01" rx="0.5" fill="#eccb42" fill-opacity="0.55" stroke="#eccb42" stroke-width="1.2"/><rect x="1425.27" y="302.59" width="3.3" height="17.71" rx="0.5" fill="#82c472" fill-opacity="0.55" stroke="#82c472" stroke-width="1.2"/><rect x="1425.27" y="283.98" width="3.3" height="17.71" rx="0.5" fill="#eccb42" fill-opacity="0.55" stroke="#eccb42" stroke-width="1.2"/><rect x="1437.92" y="293.29" width="3.3" height="27.01" rx="0.5" fill="#82c472" fill-opacity="0.55" stroke="#82c472" stroke-width="1.2"/><rect x="1437.92" y="265.38" width="3.3" height="27.01" rx="0.5" fill="#eccb42" fill-opacity="0.55" stroke="#eccb42" stroke-width="1.2"/><rect x="1444.24" y="302.59" width="3.3" height="17.71" rx="0.5" fill="#82c472" fill-opacity="0.55" stroke="#82c472" stroke-width="1.2"/><rect x="1444.24" y="283.98" width="3.3" height="17.71" rx="0.5" fill="#eccb42" fill-opacity="0.55" stroke="#eccb42" stroke-width="1.2"/><rect x="1450.56" y="302.59" width="3.3" height="17.71" rx="0.5" fill="#82c472" fill-opacity="0.55" stroke="#82c472" stroke-width="1.2"/><rect x="1450.56" y="283.98" width="3.3" height="17.71" rx="0.5" fill="#eccb42" fill-opacity="0.55" stroke="#eccb42" stroke-width="1.2"/><rect x="1450.56" y="279.33" width="3.3" height="3.75" rx="0.5" fill="#6297ee" fill-opacity="0.55" stroke="#6297ee" stroke-width="1.2"/><rect x="1463.20" y="311.90" width="3.3" height="8.40" rx="0.5" fill="#82c472" fill-opacity="0.55" stroke="#82c472" stroke-width="1.2"/><rect x="1463.20" y="302.59" width="3.3" height="8.40" rx="0.5" fill="#eccb42" fill-opacity="0.55" stroke="#eccb42" stroke-width="1.2"/><rect x="1469.52" y="311.90" width="3.3" height="8.40" rx="0.5" fill="#82c472" fill-opacity="0.55" stroke="#82c472" stroke-width="1.2"/><rect x="1469.52" y="302.59" width="3.3" height="8.40" rx="0.5" fill="#eccb42" fill-opacity="0.55" stroke="#eccb42" stroke-width="1.2"/><rect x="1482.16" y="311.90" width="3.3" height="8.40" rx="0.5" fill="#82c472" fill-opacity="0.55" stroke="#82c472" stroke-width="1.2"/><rect x="1482.16" y="302.59" width="3.3" height="8.40" rx="0.5" fill="#eccb42" fill-opacity="0.55" stroke="#eccb42" stroke-width="1.2"/><rect x="1488.48" y="293.29" width="3.3" height="27.01" rx="0.5" fill="#82c472" fill-opacity="0.55" stroke="#82c472" stroke-width="1.2"/><rect x="1488.48" y="265.38" width="3.3" height="27.01" rx="0.5" fill="#eccb42" fill-opacity="0.55" stroke="#eccb42" stroke-width="1.2"/><rect x="1494.80" y="311.90" width="3.3" height="8.40" rx="0.5" fill="#82c472" fill-opacity="0.55" stroke="#82c472" stroke-width="1.2"/><rect x="1494.80" y="302.59" width="3.3" height="8.40" rx="0.5" fill="#eccb42" fill-opacity="0.55" stroke="#eccb42" stroke-width="1.2"/><rect x="1501.12" y="311.90" width="3.3" height="8.40" rx="0.5" fill="#82c472" fill-opacity="0.55" stroke="#82c472" stroke-width="1.2"/><rect x="1501.12" y="302.59" width="3.3" height="8.40" rx="0.5" fill="#eccb42" fill-opacity="0.55" stroke="#eccb42" stroke-width="1.2"/><rect x="1507.44" y="311.90" width="3.3" height="8.40" rx="0.5" fill="#82c472" fill-opacity="0.55" stroke="#82c472" stroke-width="1.2"/><rect x="1507.44" y="302.59" width="3.3" height="8.40" rx="0.5" fill="#eccb42" fill-opacity="0.55" stroke="#eccb42" stroke-width="1.2"/><rect x="1526.40" y="311.90" width="3.3" height="8.40" rx="0.5" fill="#82c472" fill-opacity="0.55" stroke="#82c472" stroke-width="1.2"/><rect x="1526.40" y="302.59" width="3.3" height="8.40" rx="0.5" fill="#eccb42" fill-opacity="0.55" stroke="#eccb42" stroke-width="1.2"/><rect x="1532.72" y="311.90" width="3.3" height="8.40" rx="0.5" fill="#82c472" fill-opacity="0.55" stroke="#82c472" stroke-width="1.2"/><rect x="1532.72" y="302.59" width="3.3" height="8.40" rx="0.5" fill="#eccb42" fill-opacity="0.55" stroke="#eccb42" stroke-width="1.2"/><rect x="1532.72" y="297.94" width="3.3" height="3.75" rx="0.5" fill="#e0505c" fill-opacity="0.55" stroke="#e0505c" stroke-width="1.2"/><rect x="1614.89" y="316.55" width="3.3" height="3.75" rx="0.5" fill="#6297ee" fill-opacity="0.55" stroke="#6297ee" stroke-width="1.2"/><rect x="1614.89" y="302.59" width="3.3" height="13.06" rx="0.5" fill="#c4c4d2" fill-opacity="0.55" stroke="#c4c4d2" stroke-width="1.2"/><rect x="1728.65" y="307.24" width="3.3" height="13.06" rx="0.5" fill="#c4c4d2" fill-opacity="0.55" stroke="#c4c4d2" stroke-width="1.2"/><rect x="1848.74" y="316.55" width="3.3" height="3.75" rx="0.5" fill="#6297ee" fill-opacity="0.55" stroke="#6297ee" stroke-width="1.2"/><rect x="1848.74" y="302.59" width="3.3" height="13.06" rx="0.5" fill="#c4c4d2" fill-opacity="0.55" stroke="#c4c4d2" stroke-width="1.2"/></svg>
<span class="t" style="left:26.19px;top:310.45px;font-size:12.4px;color:#d2d2e1;-webkit-text-stroke:0.65px currentColor;">0</span>
<span class="t" style="left:19.80px;top:264.20px;font-size:12.4px;color:#d2d2e1;letter-spacing:-0.497px;-webkit-text-stroke:0.65px currentColor;">10</span>
<span class="t" style="left:18.70px;top:217.45px;font-size:12.4px;color:#d2d2e1;letter-spacing:0.603px;-webkit-text-stroke:0.65px currentColor;">20</span>
<span class="t" style="left:72.20px;top:325.60px;font-size:12.4px;color:#d2d2e1;letter-spacing:-0.304px;-webkit-text-stroke:0.65px currentColor;">01:25</span>
<span class="t" style="left:135.39px;top:325.60px;font-size:12.4px;color:#d2d2e1;letter-spacing:-0.304px;-webkit-text-stroke:0.65px currentColor;">01:30</span>
<span class="t" style="left:198.58px;top:325.60px;font-size:12.4px;color:#d2d2e1;letter-spacing:-0.304px;-webkit-text-stroke:0.65px currentColor;">01:35</span>
<span class="t" style="left:261.77px;top:325.60px;font-size:12.4px;color:#d2d2e1;letter-spacing:-0.304px;-webkit-text-stroke:0.65px currentColor;">01:40</span>
<span class="t" style="left:324.96px;top:325.60px;font-size:12.4px;color:#d2d2e1;letter-spacing:-0.304px;-webkit-text-stroke:0.65px currentColor;">01:45</span>
<span class="t" style="left:388.15px;top:325.60px;font-size:12.4px;color:#d2d2e1;letter-spacing:-0.304px;-webkit-text-stroke:0.65px currentColor;">01:50</span>
<span class="t" style="left:451.34px;top:325.60px;font-size:12.4px;color:#d2d2e1;letter-spacing:-0.304px;-webkit-text-stroke:0.65px currentColor;">01:55</span>
<span class="t" style="left:513.73px;top:325.60px;font-size:12.4px;color:#d2d2e1;letter-spacing:0.096px;-webkit-text-stroke:0.65px currentColor;">02:00</span>
<span class="t" style="left:576.92px;top:325.60px;font-size:12.4px;color:#d2d2e1;letter-spacing:0.096px;-webkit-text-stroke:0.65px currentColor;">02:05</span>
<span class="t" style="left:640.91px;top:325.60px;font-size:12.4px;color:#d2d2e1;letter-spacing:-0.304px;-webkit-text-stroke:0.65px currentColor;">02:10</span>
<span class="t" style="left:704.10px;top:325.60px;font-size:12.4px;color:#d2d2e1;letter-spacing:-0.304px;-webkit-text-stroke:0.65px currentColor;">02:15</span>
<span class="t" style="left:766.49px;top:325.60px;font-size:12.4px;color:#d2d2e1;letter-spacing:0.096px;-webkit-text-stroke:0.65px currentColor;">02:20</span>
<span class="t" style="left:829.68px;top:325.60px;font-size:12.4px;color:#d2d2e1;letter-spacing:0.096px;-webkit-text-stroke:0.65px currentColor;">02:25</span>
<span class="t" style="left:892.87px;top:325.60px;font-size:12.4px;color:#d2d2e1;letter-spacing:0.096px;-webkit-text-stroke:0.65px currentColor;">02:30</span>
<span class="t" style="left:956.06px;top:325.60px;font-size:12.4px;color:#d2d2e1;letter-spacing:0.096px;-webkit-text-stroke:0.65px currentColor;">02:35</span>
<span class="t" style="left:1019.25px;top:325.60px;font-size:12.4px;color:#d2d2e1;letter-spacing:0.096px;-webkit-text-stroke:0.65px currentColor;">02:40</span>
<span class="t" style="left:1082.44px;top:325.60px;font-size:12.4px;color:#d2d2e1;letter-spacing:0.096px;-webkit-text-stroke:0.65px currentColor;">02:45</span>
<span class="t" style="left:1145.63px;top:325.60px;font-size:12.4px;color:#d2d2e1;letter-spacing:0.096px;-webkit-text-stroke:0.65px currentColor;">02:50</span>
<span class="t" style="left:1208.82px;top:325.60px;font-size:12.4px;color:#d2d2e1;letter-spacing:0.096px;-webkit-text-stroke:0.65px currentColor;">02:55</span>
<span class="t" style="left:1272.01px;top:325.60px;font-size:12.4px;color:#d2d2e1;letter-spacing:0.096px;-webkit-text-stroke:0.65px currentColor;">03:00</span>
<span class="t" style="left:1335.20px;top:325.60px;font-size:12.4px;color:#d2d2e1;letter-spacing:0.096px;-webkit-text-stroke:0.65px currentColor;">03:05</span>
<span class="t" style="left:1399.19px;top:325.60px;font-size:12.4px;color:#d2d2e1;letter-spacing:-0.304px;-webkit-text-stroke:0.65px currentColor;">03:10</span>
<span class="t" style="left:1462.38px;top:325.60px;font-size:12.4px;color:#d2d2e1;letter-spacing:-0.304px;-webkit-text-stroke:0.65px currentColor;">03:15</span>
<span class="t" style="left:1524.77px;top:325.60px;font-size:12.4px;color:#d2d2e1;letter-spacing:0.096px;-webkit-text-stroke:0.65px currentColor;">03:20</span>
<span class="t" style="left:1587.96px;top:325.60px;font-size:12.4px;color:#d2d2e1;letter-spacing:0.096px;-webkit-text-stroke:0.65px currentColor;">03:25</span>
<span class="t" style="left:1651.15px;top:325.60px;font-size:12.4px;color:#d2d2e1;letter-spacing:0.096px;-webkit-text-stroke:0.65px currentColor;">03:30</span>
<span class="t" style="left:1714.34px;top:325.60px;font-size:12.4px;color:#d2d2e1;letter-spacing:0.096px;-webkit-text-stroke:0.65px currentColor;">03:35</span>
<span class="t" style="left:1777.53px;top:325.60px;font-size:12.4px;color:#d2d2e1;letter-spacing:0.096px;-webkit-text-stroke:0.65px currentColor;">03:40</span>
<span class="t" style="left:1840.72px;top:325.60px;font-size:12.4px;color:#d2d2e1;letter-spacing:0.096px;-webkit-text-stroke:0.65px currentColor;">03:45</span>
<div class="b" style="left:17.4px;top:350px;width:15.8px;height:6px;background:rgba(7,7,15,0.75);border-radius:3px;"></div>
<div class="b" style="left:18.4px;top:351px;width:13.8px;height:4px;background:#88c474;border-radius:2px;"></div>
<span class="t" style="left:39.60px;top:342.97px;font-size:12.2px;color:#d2d2e1;letter-spacing:-0.073px;-webkit-text-stroke:0.65px currentColor;">AMPDeviceDiscoveryAgent</span>
<div class="b" style="left:195.4px;top:350px;width:15.8px;height:6px;background:rgba(7,7,15,0.75);border-radius:3px;"></div>
<div class="b" style="left:196.4px;top:351px;width:13.8px;height:4px;background:#f0d247;border-radius:2px;"></div>
<span class="t" style="left:217.60px;top:342.97px;font-size:12.2px;color:#d2d2e1;letter-spacing:0.049px;-webkit-text-stroke:0.65px currentColor;">MobileDeviceUpdater</span>
<div class="b" style="left:344px;top:350px;width:15.8px;height:6px;background:rgba(7,7,15,0.75);border-radius:3px;"></div>
<div class="b" style="left:345px;top:351px;width:13.8px;height:4px;background:#94b8f8;border-radius:2px;"></div>
<span class="t" style="left:365.60px;top:342.97px;font-size:12.2px;color:#d2d2e1;letter-spacing:0.066px;-webkit-text-stroke:0.65px currentColor;">installd</span>
<div class="b" style="left:413px;top:350px;width:15.8px;height:6px;background:rgba(7,7,15,0.75);border-radius:3px;"></div>
<div class="b" style="left:414px;top:351px;width:13.8px;height:4px;background:#ee8a3a;border-radius:2px;"></div>
<span class="t" style="left:434.80px;top:342.97px;font-size:12.2px;color:#d2d2e1;letter-spacing:0.087px;-webkit-text-stroke:0.65px currentColor;">newsyslog</span>
<div class="b" style="left:501px;top:350px;width:15.8px;height:6px;background:rgba(7,7,15,0.75);border-radius:3px;"></div>
<div class="b" style="left:502px;top:351px;width:13.8px;height:4px;background:#e0505c;border-radius:2px;"></div>
<span class="t" style="left:523.00px;top:342.97px;font-size:12.2px;color:#d2d2e1;letter-spacing:0.205px;-webkit-text-stroke:0.65px currentColor;">softwareupdated</span>
<div class="b" style="left:624.4px;top:350px;width:15.8px;height:6px;background:rgba(7,7,15,0.75);border-radius:3px;"></div>
<div class="b" style="left:625.4px;top:351px;width:13.8px;height:4px;background:#6297ee;border-radius:2px;"></div>
<span class="t" style="left:646.40px;top:342.97px;font-size:12.2px;color:#d2d2e1;letter-spacing:0.045px;-webkit-text-stroke:0.65px currentColor;">syslogd</span>
<div class="b" style="left:696.6px;top:350px;width:15.8px;height:6px;background:rgba(7,7,15,0.75);border-radius:3px;"></div>
<div class="b" style="left:697.6px;top:351px;width:13.8px;height:4px;background:#d6d6e4;border-radius:2px;"></div>
<span class="t" style="left:718.60px;top:342.97px;font-size:12.2px;color:#d2d2e1;letter-spacing:0.014px;-webkit-text-stroke:0.65px currentColor;">logs</span>
</section>
<section class="panel-logs" aria-label="Logs">
<div class="b" style="left:7px;top:378px;width:1905px;height:636px;background:#1a1c20;border:1px solid #2c2e34;border-radius:3px;"></div>
<span class="t" style="left:15.30px;top:383.62px;font-size:13.5px;color:#d2d2e1;letter-spacing:0.473px;-webkit-text-stroke:0.8px currentColor;">Logs</span>
<style>.lg{font-family:"Liberation Mono", monospace;font-size:11.95px;letter-spacing:-0.237px;color:#d2d2e2;-webkit-text-stroke:0.62px #d2d2e2;}</style>
<div class="clip" style="left:0;top:410px;width:56px;height:596px"><div class="b" style="left:39.3px;top:7.90px;width:4.2px;height:16px;background:#8e8e8e"></div><svg style="left:47.6px;top:9.90px" width="6" height="12" viewBox="0 0 6 12"><path d="M1.1 3.1 L4.5 6 L1.1 8.9" fill="none" stroke="#ccccdc" stroke-width="1.5" stroke-linecap="round" stroke-linejoin="round"/></svg><div class="b" style="left:39.3px;top:26.73px;width:4.2px;height:16px;background:#8e8e8e"></div><svg style="left:47.6px;top:28.73px" width="6" height="12" viewBox="0 0 6 12"><path d="M1.1 3.1 L4.5 6 L1.1 8.9" fill="none" stroke="#ccccdc" stroke-width="1.5" stroke-linecap="round" stroke-linejoin="round"/></svg><div class="b" style="left:39.3px;top:45.57px;width:4.2px;height:16px;background:#e0564a"></div><svg style="left:47.6px;top:47.57px" width="6" height="12" viewBox="0 0 6 12"><path d="M1.1 3.1 L4.5 6 L1.1 8.9" fill="none" stroke="#ccccdc" stroke-width="1.5" stroke-linecap="round" stroke-linejoin="round"/></svg><div class="b" style="left:39.3px;top:64.40px;width:4.2px;height:16px;background:#8e8e8e"></div><svg style="left:47.6px;top:66.40px" width="6" height="12" viewBox="0 0 6 12"><path d="M1.1 3.1 L4.5 6 L1.1 8.9" fill="none" stroke="#ccccdc" stroke-width="1.5" stroke-linecap="round" stroke-linejoin="round"/></svg><div class="b" style="left:39.3px;top:83.23px;width:4.2px;height:16px;background:#8e8e8e"></div><svg style="left:47.6px;top:85.23px" width="6" height="12" viewBox="0 0 6 12"><path d="M1.1 3.1 L4.5 6 L1.1 8.9" fill="none" stroke="#ccccdc" stroke-width="1.5" stroke-linecap="round" stroke-linejoin="round"/></svg><div class="b" style="left:39.3px;top:102.06px;width:4.2px;height:16px;background:#8e8e8e"></div><svg style="left:47.6px;top:104.06px" width="6" height="12" viewBox="0 0 6 12"><path d="M1.1 3.1 L4.5 6 L1.1 8.9" fill="none" stroke="#ccccdc" stroke-width="1.5" stroke-linecap="round" stroke-linejoin="round"/></svg><div class="b" style="left:39.3px;top:120.90px;width:4.2px;height:16px;background:#e0564a"></div><svg style="left:47.6px;top:122.90px" width="6" height="12" viewBox="0 0 6 12"><path d="M1.1 3.1 L4.5 6 L1.1 8.9" fill="none" stroke="#ccccdc" stroke-width="1.5" stroke-linecap="round" stroke-linejoin="round"/></svg><div class="b" style="left:39.3px;top:139.73px;width:4.2px;height:16px;background:#8e8e8e"></div><svg style="left:47.6px;top:141.73px" width="6" height="12" viewBox="0 0 6 12"><path d="M1.1 3.1 L4.5 6 L1.1 8.9" fill="none" stroke="#ccccdc" stroke-width="1.5" stroke-linecap="round" stroke-linejoin="round"/></svg><div class="b" style="left:39.3px;top:158.56px;width:4.2px;height:16px;background:#8e8e8e"></div><svg style="left:47.6px;top:160.56px" width="6" height="12" viewBox="0 0 6 12"><path d="M1.1 3.1 L4.5 6 L1.1 8.9" fill="none" stroke="#ccccdc" stroke-width="1.5" stroke-linecap="round" stroke-linejoin="round"/></svg><div class="b" style="left:39.3px;top:177.40px;width:4.2px;height:16px;background:#8e8e8e"></div><svg style="left:47.6px;top:179.40px" width="6" height="12" viewBox="0 0 6 12"><path d="M1.1 3.1 L4.5 6 L1.1 8.9" fill="none" stroke="#ccccdc" stroke-width="1.5" stroke-linecap="round" stroke-linejoin="round"/></svg><div class="b" style="left:39.3px;top:196.23px;width:4.2px;height:16px;background:#e0564a"></div><svg style="left:47.6px;top:198.23px" width="6" height="12" viewBox="0 0 6 12"><path d="M1.1 3.1 L4.5 6 L1.1 8.9" fill="none" stroke="#ccccdc" stroke-width="1.5" stroke-linecap="round" stroke-linejoin="round"/></svg><div class="b" style="left:39.3px;top:215.06px;width:4.2px;height:16px;background:#8e8e8e"></div><svg style="left:47.6px;top:217.06px" width="6" height="12" viewBox="0 0 6 12"><path d="M1.1 3.1 L4.5 6 L1.1 8.9" fill="none" stroke="#ccccdc" stroke-width="1.5" stroke-linecap="round" stroke-linejoin="round"/></svg><div class="b" style="left:39.3px;top:233.90px;width:4.2px;height:16px;background:#8e8e8e"></div><svg style="left:47.6px;top:235.90px" width="6" height="12" viewBox="0 0 6 12"><path d="M1.1 3.1 L4.5 6 L1.1 8.9" fill="none" stroke="#ccccdc" stroke-width="1.5" stroke-linecap="round" stroke-linejoin="round"/></svg><div class="b" style="left:39.3px;top:252.73px;width:4.2px;height:16px;background:#8e8e8e"></div><svg style="left:47.6px;top:254.73px" width="6" height="12" viewBox="0 0 6 12"><path d="M1.1 3.1 L4.5 6 L1.1 8.9" fill="none" stroke="#ccccdc" stroke-width="1.5" stroke-linecap="round" stroke-linejoin="round"/></svg><div class="b" style="left:39.3px;top:271.56px;width:4.2px;height:16px;background:#8e8e8e"></div><svg style="left:47.6px;top:273.56px" width="6" height="12" viewBox="0 0 6 12"><path d="M1.1 3.1 L4.5 6 L1.1 8.9" fill="none" stroke="#ccccdc" stroke-width="1.5" stroke-linecap="round" stroke-linejoin="round"/></svg><div class="b" style="left:39.3px;top:290.39px;width:4.2px;height:16px;background:#8e8e8e"></div><svg style="left:47.6px;top:292.39px" width="6" height="12" viewBox="0 0 6 12"><path d="M1.1 3.1 L4.5 6 L1.1 8.9" fill="none" stroke="#ccccdc" stroke-width="1.5" stroke-linecap="round" stroke-linejoin="round"/></svg><div class="b" style="left:39.3px;top:309.23px;width:4.2px;height:16px;background:#8e8e8e"></div><svg style="left:47.6px;top:311.23px" width="6" height="12" viewBox="0 0 6 12"><path d="M1.1 3.1 L4.5 6 L1.1 8.9" fill="none" stroke="#ccccdc" stroke-width="1.5" stroke-linecap="round" stroke-linejoin="round"/></svg><div class="b" style="left:39.3px;top:328.06px;width:4.2px;height:16px;background:#8e8e8e"></div><svg style="left:47.6px;top:330.06px" width="6" height="12" viewBox="0 0 6 12"><path d="M1.1 3.1 L4.5 6 L1.1 8.9" fill="none" stroke="#ccccdc" stroke-width="1.5" stroke-linecap="round" stroke-linejoin="round"/></svg><div class="b" style="left:39.3px;top:346.89px;width:4.2px;height:16px;background:#8e8e8e"></div><svg style="left:47.6px;top:348.89px" width="6" height="12" viewBox="0 0 6 12"><path d="M1.1 3.1 L4.5 6 L1.1 8.9" fill="none" stroke="#ccccdc" stroke-width="1.5" stroke-linecap="round" stroke-linejoin="round"/></svg><div class="b" style="left:39.3px;top:365.73px;width:4.2px;height:16px;background:#8e8e8e"></div><svg style="left:47.6px;top:367.73px" width="6" height="12" viewBox="0 0 6 12"><path d="M1.1 3.1 L4.5 6 L1.1 8.9" fill="none" stroke="#ccccdc" stroke-width="1.5" stroke-linecap="round" stroke-linejoin="round"/></svg><div class="b" style="left:39.3px;top:384.56px;width:4.2px;height:16px;background:#8e8e8e"></div><svg style="left:47.6px;top:386.56px" width="6" height="12" viewBox="0 0 6 12"><path d="M1.1 3.1 L4.5 6 L1.1 8.9" fill="none" stroke="#ccccdc" stroke-width="1.5" stroke-linecap="round" stroke-linejoin="round"/></svg><div class="b" style="left:39.3px;top:403.39px;width:4.2px;height:16px;background:#8e8e8e"></div><svg style="left:47.6px;top:405.39px" width="6" height="12" viewBox="0 0 6 12"><path d="M1.1 3.1 L4.5 6 L1.1 8.9" fill="none" stroke="#ccccdc" stroke-width="1.5" stroke-linecap="round" stroke-linejoin="round"/></svg><div class="b" style="left:39.3px;top:422.23px;width:4.2px;height:16px;background:#8e8e8e"></div><svg style="left:47.6px;top:424.23px" width="6" height="12" viewBox="0 0 6 12"><path d="M1.1 3.1 L4.5 6 L1.1 8.9" fill="none" stroke="#ccccdc" stroke-width="1.5" stroke-linecap="round" stroke-linejoin="round"/></svg><div class="b" style="left:39.3px;top:441.06px;width:4.2px;height:16px;background:#8e8e8e"></div><svg style="left:47.6px;top:443.06px" width="6" height="12" viewBox="0 0 6 12"><path d="M1.1 3.1 L4.5 6 L1.1 8.9" fill="none" stroke="#ccccdc" stroke-width="1.5" stroke-linecap="round" stroke-linejoin="round"/></svg><div class="b" style="left:39.3px;top:459.89px;width:4.2px;height:16px;background:#8e8e8e"></div><svg style="left:47.6px;top:461.89px" width="6" height="12" viewBox="0 0 6 12"><path d="M1.1 3.1 L4.5 6 L1.1 8.9" fill="none" stroke="#ccccdc" stroke-width="1.5" stroke-linecap="round" stroke-linejoin="round"/></svg><div class="b" style="left:39.3px;top:478.72px;width:4.2px;height:16px;background:#8e8e8e"></div><svg style="left:47.6px;top:480.72px" width="6" height="12" viewBox="0 0 6 12"><path d="M1.1 3.1 L4.5 6 L1.1 8.9" fill="none" stroke="#ccccdc" stroke-width="1.5" stroke-linecap="round" stroke-linejoin="round"/></svg><div class="b" style="left:39.3px;top:497.56px;width:4.2px;height:16px;background:#8e8e8e"></div><svg style="left:47.6px;top:499.56px" width="6" height="12" viewBox="0 0 6 12"><path d="M1.1 3.1 L4.5 6 L1.1 8.9" fill="none" stroke="#ccccdc" stroke-width="1.5" stroke-linecap="round" stroke-linejoin="round"/></svg><div class="b" style="left:39.3px;top:516.39px;width:4.2px;height:16px;background:#8e8e8e"></div><svg style="left:47.6px;top:518.39px" width="6" height="12" viewBox="0 0 6 12"><path d="M1.1 3.1 L4.5 6 L1.1 8.9" fill="none" stroke="#ccccdc" stroke-width="1.5" stroke-linecap="round" stroke-linejoin="round"/></svg><div class="b" style="left:39.3px;top:535.22px;width:4.2px;height:16px;background:#8e8e8e"></div><svg style="left:47.6px;top:537.22px" width="6" height="12" viewBox="0 0 6 12"><path d="M1.1 3.1 L4.5 6 L1.1 8.9" fill="none" stroke="#ccccdc" stroke-width="1.5" stroke-linecap="round" stroke-linejoin="round"/></svg><div class="b" style="left:39.3px;top:554.06px;width:4.2px;height:16px;background:#8e8e8e"></div><svg style="left:47.6px;top:556.06px" width="6" height="12" viewBox="0 0 6 12"><path d="M1.1 3.1 L4.5 6 L1.1 8.9" fill="none" stroke="#ccccdc" stroke-width="1.5" stroke-linecap="round" stroke-linejoin="round"/></svg><div class="b" style="left:39.3px;top:572.89px;width:4.2px;height:16px;background:#8e8e8e"></div><svg style="left:47.6px;top:574.89px" width="6" height="12" viewBox="0 0 6 12"><path d="M1.1 3.1 L4.5 6 L1.1 8.9" fill="none" stroke="#ccccdc" stroke-width="1.5" stroke-linecap="round" stroke-linejoin="round"/></svg><div class="b" style="left:39.3px;top:591.72px;width:4.2px;height:16px;background:#8e8e8e"></div><svg style="left:47.6px;top:593.72px" width="6" height="12" viewBox="0 0 6 12"><path d="M1.1 3.1 L4.5 6 L1.1 8.9" fill="none" stroke="#ccccdc" stroke-width="1.5" stroke-linecap="round" stroke-linejoin="round"/></svg></div>
<div class="clip" style="left:0;top:410px;width:1911px;height:595px"><span class="t lg" style="left:57.5px;top:7.41px">Fri Nov 17 03:44:00.805 Usb Host Notification Apple80211Set: seqNum 7552 Total 0 chg 0 en0</span><span class="t lg" style="left:57.5px;top:26.24px">Fri Nov 17 03:44:00.761 Usb Host Notification Apple80211Set: seqNum 7551 Total 0 chg 0 en0</span><span class="t lg" style="left:57.5px;top:45.08px">Fri Nov 17 03:44:00.236 Usb Host Notification Error Apple80211Set: Device power is off seqNum 7550 Total 0 chg 0 en0</span><span class="t lg" style="left:57.5px;top:63.91px">syslogd[326]: ASL Sender Statistics</span><span class="t lg" style="left:57.5px;top:82.74px">Fri Nov 17 03:34:59.801 Usb Host Notification Apple80211Set: seqNum 7549 Total 0 chg 0 en0</span><span class="t lg" style="left:57.5px;top:101.58px">Fri Nov 17 03:34:59.752 Usb Host Notification Apple80211Set: seqNum 7548 Total 0 chg 0 en0</span><span class="t lg" style="left:57.5px;top:120.41px">Fri Nov 17 03:34:59.233 Usb Host Notification Error Apple80211Set: Device power is off seqNum 7547 Total 0 chg 0 en0</span><span class="t lg" style="left:57.5px;top:139.24px">Fri Nov 17 03:25:58.779 Usb Host Notification Apple80211Set: seqNum 7546 Total 0 chg 0 en0</span><span class="t lg" style="left:57.5px;top:158.07px">Fri Nov 17 03:25:58.732 Usb Host Notification Apple80211Set: seqNum 7545 Total 0 chg 0 en0</span><span class="t lg" style="left:57.5px;top:176.91px">syslogd[326]: ASL Sender Statistics</span><span class="t lg" style="left:57.5px;top:195.74px">Fri Nov 17 03:25:58.179 Usb Host Notification Error Apple80211Set: Device power is off seqNum 7544 Total 0 chg 0 en0</span><span class="t lg" style="left:57.5px;top:214.57px">softwareupdated[19599]: SUOSUPowerEventObserver: System will sleep</span><span class="t lg" style="left:57.5px;top:233.41px">MobileDeviceUpdater[642]: Entered:__thr_AMMuxedDeviceDisconnected, mux-device:10107</span><span class="t lg" style="left:57.5px;top:252.24px">AMPDeviceDiscoveryAgent[701]: Entered:__thr_AMMuxedDeviceDisconnected, mux-device:10107</span><span class="t lg" style="left:57.5px;top:271.07px">MobileDeviceUpdater[642]: Entered:_AMMuxedDeviceDisconnected, mux-device:10107</span><span class="t lg" style="left:57.5px;top:289.91px">AMPDeviceDiscoveryAgent[701]: Entered:_AMMuxedDeviceDisconnected, mux-device:10107</span><span class="t lg" style="left:57.5px;top:308.74px">AMPDeviceDiscoveryAgent[701]: Entered:__thr_AMMuxedDeviceDisconnected, mux-device:10106</span><span class="t lg" style="left:57.5px;top:327.57px">MobileDeviceUpdater[642]: Entered:__thr_AMMuxedDeviceDisconnected, mux-device:10106</span><span class="t lg" style="left:57.5px;top:346.40px">AMPDeviceDiscoveryAgent[701]: Entered:_AMMuxedDeviceDisconnected, mux-device:10106</span><span class="t lg" style="left:57.5px;top:365.24px">MobileDeviceUpdater[642]: Entered:_AMMuxedDeviceDisconnected, mux-device:10106</span><span class="t lg" style="left:57.5px;top:384.07px">MobileDeviceUpdater[642]: Entered:__thr_AMMuxedDeviceDisconnected, mux-device:10105</span><span class="t lg" style="left:57.5px;top:402.90px">AMPDeviceDiscoveryAgent[701]: Entered:__thr_AMMuxedDeviceDisconnected, mux-device:10105</span><span class="t lg" style="left:57.5px;top:421.74px">AMPDeviceDiscoveryAgent[701]: Entered:_AMMuxedDeviceDisconnected, mux-device:10105</span><span class="t lg" style="left:57.5px;top:440.57px">MobileDeviceUpdater[642]: Entered:_AMMuxedDeviceDisconnected, mux-device:10105</span><span class="t lg" style="left:57.5px;top:459.40px">AMPDeviceDiscoveryAgent[701]: Entered:__thr_AMMuxedDeviceDisconnected, mux-device:10104</span><span class="t lg" style="left:57.5px;top:478.24px">MobileDeviceUpdater[642]: Entered:__thr_AMMuxedDeviceDisconnected, mux-device:10104</span><span class="t lg" style="left:57.5px;top:497.07px">AMPDeviceDiscoveryAgent[701]: Entered:_AMMuxedDeviceDisconnected, mux-device:10104</span><span class="t lg" style="left:57.5px;top:515.90px">MobileDeviceUpdater[642]: Entered:_AMMuxedDeviceDisconnected, mux-device:10104</span><span class="t lg" style="left:57.5px;top:534.73px">AMPDeviceDiscoveryAgent[701]: Entered:__thr_AMMuxedDeviceDisconnected, mux-device:10103</span><span class="t lg" style="left:57.5px;top:553.57px">MobileDeviceUpdater[642]: Entered:__thr_AMMuxedDeviceDisconnected, mux-device:10103</span><span class="t lg" style="left:57.5px;top:572.40px">MobileDeviceUpdater[642]: Entered:_AMMuxedDeviceDisconnected, mux-device:10103</span><span class="t lg" style="left:57.5px;top:591.23px">AMPDeviceDiscoveryAgent[701]: Entered:_AMMuxedDeviceDisconnected, mux-device:10103</span></div>
</section>
</div>
</body></html>
